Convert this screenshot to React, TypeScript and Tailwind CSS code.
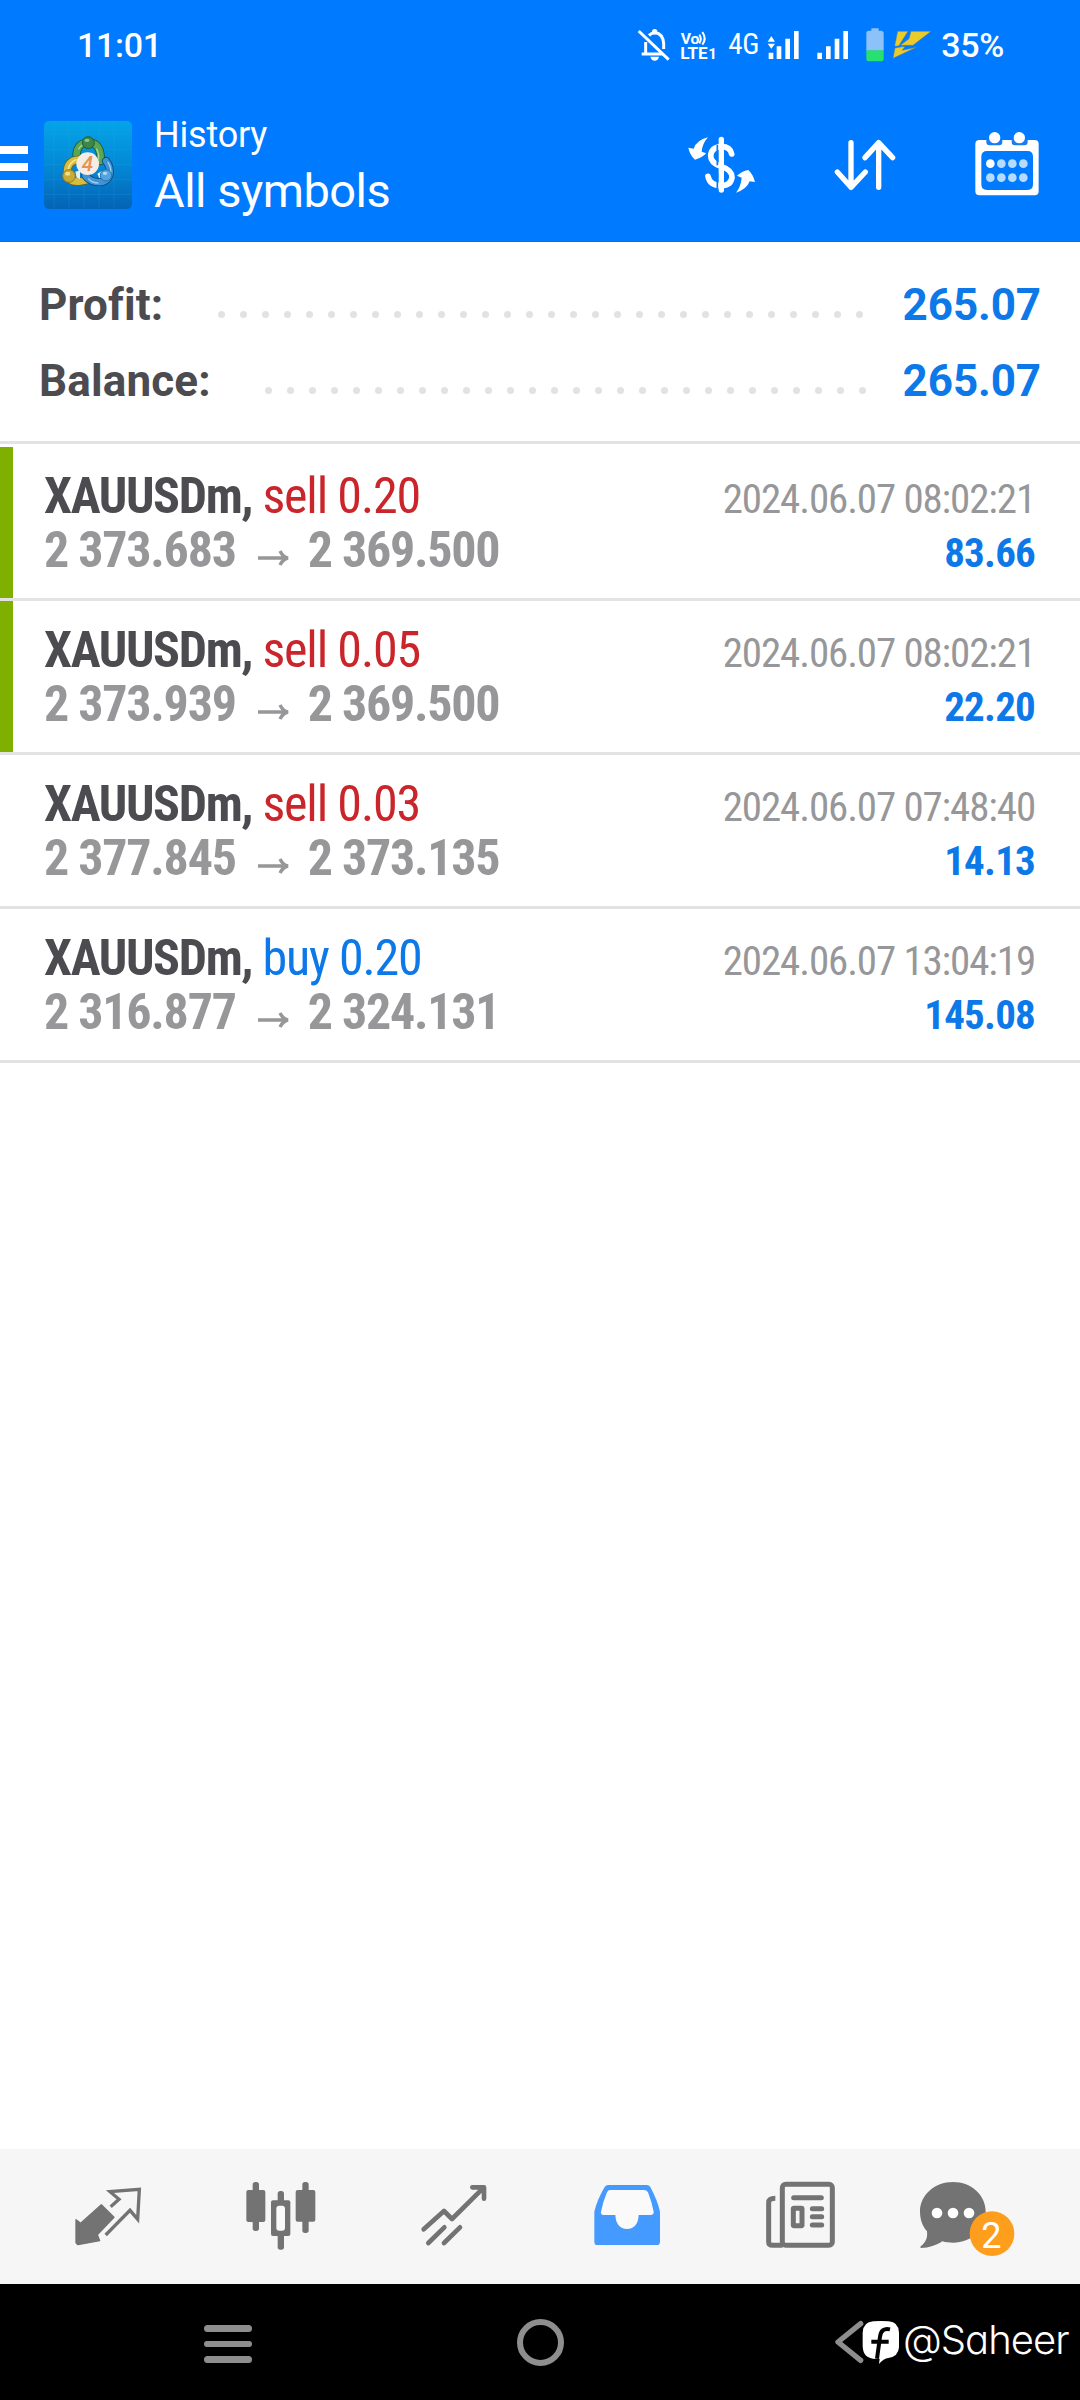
import React from 'react'

type Deal = {
    side: 'sell' | 'buy'
    volume: string
    open: string
    close: string
    time: string
    profit: string
    marked?: boolean
}

const deals: Deal[] = [
    { side: 'sell', volume: '0.20', open: '2 373.683', close: '2 369.500', time: '2024.06.07 08:02:21', profit: '83.66', marked: true },
    { side: 'sell', volume: '0.05', open: '2 373.939', close: '2 369.500', time: '2024.06.07 08:02:21', profit: '22.20', marked: true },
    { side: 'sell', volume: '0.03', open: '2 377.845', close: '2 373.135', time: '2024.06.07 07:48:40', profit: '14.13' },
    { side: 'buy', volume: '0.20', open: '2 316.877', close: '2 324.131', time: '2024.06.07 13:04:19', profit: '145.08' },
]

const StatusBar = () => (
    <div className="flex h-[91px] items-center pb-[2px] pl-[77px] pr-[76px] text-[34px] font-medium leading-none tracking-[-0.3px]">
        <span>11:01</span>
        <div className="ml-auto flex items-center">
            <svg className="h-[34px] w-[34px]" viewBox="52 50 102 102" fill="none" stroke="currentColor" strokeWidth="9">
                <path d="M78 128V92M88 72q8-8 18-8 24 2 26 33v16M66 128h64" />
                <path d="M57 59l90 86" />
                <circle cx="105" cy="61" r="8" fill="currentColor" stroke="none" />
                <path d="M92 136h26q-3 12-13 12t-13-12z" fill="currentColor" stroke="none" />
            </svg>
            <svg className="ml-[9px] h-[34px] w-[38px]" viewBox="183 50 114 102" fill="currentColor">
                <text x="185" y="97" fontSize="43" fontWeight="700" textLength="56" lengthAdjust="spacingAndGlyphs">Vo</text>
                <path d="M241 70q9 13 0 26M250 62q14 20 0 38" fill="none" stroke="currentColor" strokeWidth="6" />
                <text x="184" y="142" fontSize="49" fontWeight="700" textLength="82" lengthAdjust="spacingAndGlyphs">LTE</text>
                <text x="268" y="142" fontSize="45" fontWeight="700">1</text>
            </svg>
            <span className="ml-[10px] text-[29px] font-normal [font-stretch:75%]">4G</span>
            <svg className="ml-[8px] h-[34px] w-[34px]" viewBox="441 50 102 102" fill="currentColor">
                <path d="M454 74l11 17h-22zM454 112l-11-15h22zM446 124h14v19h-14zM470 105h14v38h-14zM496 82h14v61h-14zM522 59h14v84h-14z" />
            </svg>
            <svg className="ml-[15px] h-[34px] w-[34px]" viewBox="588 50 102 102" fill="currentColor">
                <path d="M592 124h14v19h-14zM618 105h14v38h-14zM644 82h14v61h-14zM670 59h14v84h-14z" />
            </svg>
            <svg className="ml-[15px] h-[34px] w-[20px]" viewBox="733 50 60 102">
                <path d="M752 51h22v7h7q8 0 8 8v52h-52V66q0-8 8-8h7z" fill="#8cc2f8" />
                <path d="M737 117h52v25q0 8-8 8h-36q-8 0-8-8z" fill="#27e070" />
            </svg>
            <svg className="ml-[6px] h-[34px] w-[42px]" viewBox="810 50 126 102" fill="#e9cb2c" stroke="#5b7f8a" strokeWidth="1.5">
                <path d="M830 60h31l-28 44h-12z" />
                <path d="M870 60h60l-54 42h-38l26-20z" />
                <path d="M822 110l30-5-8 12 42-9-70 33z" />
            </svg>
            <span className="ml-[8px]">35%</span>
        </div>
    </div>
)

const Logo = () => (
    <svg className="h-[88px] w-[88px]" viewBox="0 0 264 264">
        <defs>
            <linearGradient id="tile" x1="0" y1="0" x2="0" y2="1">
                <stop offset="0" stopColor="#04a4e8" />
                <stop offset="0.5" stopColor="#0389d6" />
                <stop offset="1" stopColor="#0463b4" />
            </linearGradient>
        </defs>
        <rect width="264" height="264" rx="15" fill="url(#tile)" />
        <path d="M30 0v264M75 0v264M120 0v264M165 0v264M210 0v264M0 40h264M0 85h264M0 130h264M0 175h264M0 220h264" stroke="#2ba8ea" strokeOpacity="0.3" strokeWidth="2" />
        <g fill="none" strokeLinecap="round">
            <path d="M98 112q-4-46 36-48 38 2 36 56" stroke="#1c5630" strokeWidth="25" />
            <path d="M98 112q-4-46 36-48 38 2 36 56" stroke="#5aa652" strokeWidth="20" />
            <path d="M104 84q8-14 22-17M158 84q8 16 6 30" stroke="#a8d79b" strokeWidth="4" />
            <path d="M104 116q-34 2-35 38 2 30 36 28l22-4" stroke="#6a6425" strokeWidth="25" />
            <path d="M104 116q-34 2-35 38 2 30 36 28l22-4" stroke="#d6bd3d" strokeWidth="20" />
            <path d="M95 116q-18 8-22 28" stroke="#f4e58f" strokeWidth="5" />
            <path d="M186 120q16 20 10 44-12 26-44 18-18-4-28-18" stroke="#0b477c" strokeWidth="24" />
            <path d="M186 120q16 20 10 44-12 26-44 18-18-4-28-18" stroke="#3f93d6" strokeWidth="19" />
            <path d="M192 124q10 16 8 30M134 174q12 12 28 12" stroke="#9dd0f4" strokeWidth="4" />
        </g>
        <path d="M94 152l14-4v26l-10-4zM160 158l14-8 2 16-10 6z" fill="#e4f1ee" />
        <circle cx="133" cy="65" r="18" fill="#3b8747" stroke="#205e35" strokeWidth="3" />
        <ellipse cx="129" cy="58" rx="8" ry="5" fill="#8cc58a" />
        <circle cx="75" cy="165" r="19" fill="#c9aa35" stroke="#8a7c2b" strokeWidth="3" />
        <ellipse cx="71" cy="158" rx="8" ry="6" fill="#f0df86" />
        <circle cx="186" cy="163" r="17" fill="#4ea5e2" stroke="#2973ae" strokeWidth="3" />
        <ellipse cx="183" cy="157" rx="7" ry="5" fill="#abd9f6" />
        <circle cx="131" cy="128" r="34" fill="#f6ece6" />
        <text x="130" y="151" textAnchor="middle" fontSize="62" fontStyle="italic" fontWeight="500" fill="#e59353">4</text>
    </svg>
)

const AppBar = () => (
    <div className="flex h-[151px] border-b border-[#0b6fd8]">
        <div className="mt-[55px] flex w-[28px] flex-col gap-[9px]">
            <div className="h-[8px] bg-white" />
            <div className="h-[8px] bg-white" />
            <div className="h-[8px] bg-white" />
        </div>
        <div className="ml-[16px] mt-[30px]">
            <Logo />
        </div>
        <div className="ml-[22px] mt-[20px]">
            <div className="text-[36px] leading-[48px] tracking-[-0.2px]">History</div>
            <div className="text-[47px] leading-[64px] tracking-[-0.5px]">All symbols</div>
        </div>
        <div className="ml-auto mr-[38px] mt-[39px] flex">
            <svg className="h-[70px] w-[80px]" viewBox="70 60 240 210" fill="none" stroke="currentColor">
                <path d="M185 88v152" strokeWidth="16" strokeLinecap="round" />
                <path d="M216 132q-4-22-31-22-30 2-32 27 0 22 33 33 31 10 31 32-3 24-32 25-35 0-40-28" strokeWidth="17" strokeLinecap="round" />
                <path d="M173 104v62M173 190v44" stroke="#007aff" strokeWidth="5" />
                <path d="M145 82q-34 8-43 34l-16-3q4 22 20 36 20-5 34-19l-14-5q2-24 19-43z" fill="currentColor" stroke="none" />
                <path d="M229 248q32-10 41-34l16 2q-5-22-20-36-20 4-34 17l14 6q-2 26-17 45z" fill="currentColor" stroke="none" />
            </svg>
            <svg className="ml-[69px] h-[70px] w-[66px]" viewBox="516 60 198 210" fill="none" stroke="currentColor" strokeWidth="16" strokeLinecap="round" strokeLinejoin="round">
                <path d="M573 98v134M532 186l41 46 43-46M656 232V98M615 143l41-45 42 45" />
            </svg>
            <svg className="ml-[74px] h-[70px] w-[70px]" viewBox="935 60 210 210" fill="currentColor">
                <path fillRule="evenodd" d="M957 90h166q12 0 12 12v142q0 12-12 12H957q-12 0-12-12V102q0-12 12-12zM980 123q-17 0-17 17v83q0 17 17 17h122q16 0 16-17v-83q0-17-16-17z" />
                <path d="M978 88h48v8q0 10-10 10h-28q-10 0-10-10zM1054 88h48v8q0 10-10 10h-28q-10 0-10-10z" fill="#1a7cf0" />
                <circle cx="1003" cy="83" r="17" />
                <circle cx="1077" cy="83" r="17" />
                <circle cx="990" cy="161" r="13" />
                <g fill="#b5dcff">
                    <circle cx="1023" cy="161" r="13" />
                    <circle cx="1056" cy="161" r="13" />
                    <circle cx="1089" cy="161" r="13" />
                    <circle cx="990" cy="203" r="13" />
                    <circle cx="1023" cy="203" r="13" />
                    <circle cx="1056" cy="203" r="13" />
                    <circle cx="1089" cy="203" r="13" />
                </g>
            </svg>
        </div>
    </div>
)

const SummaryRow = ({ label, value, dots, end }: { label: string; value: string; dots: number; end: string }) => (
    <div className="flex h-[76px] pl-[39px] pr-[39px] text-[44px] font-bold leading-[76px]">
        <span className="tracking-[0.15px] text-[#4b4b50]">{label}</span>
        <div className={`ml-auto mt-[44px] flex gap-[15px] ${end}`}>
            {Array.from({ length: dots }, (_, i) => (
                <div key={i} className="h-[7px] w-[7px] rounded-full bg-[#e2e2e2]" />
            ))}
        </div>
        <span className="tracking-[-0.1px] text-[#0d78e8]">{value}</span>
    </div>
)

const DealRow = ({ side, volume, open, close, time, profit, marked }: Deal) => (
    <div className="flex h-[154px] border-b-[3px] border-[#e3e3e3] [font-stretch:75%]">
        <div className={marked ? 'w-[13px] bg-[#7fb000]' : 'w-[13px]'} />
        <div className="flex flex-1 justify-between pl-[31px] pr-[45px]">
            <div className="pt-[22px] text-[50px] leading-[54px]">
                <div className="tracking-[-1.35px]">
                    <span className="font-bold text-[#4b4b50]">XAUUSDm, </span>
                    <span className={side === 'sell' ? 'tracking-[-1.15px] text-[#c9252b]' : 'tracking-[-1.15px] text-[#0d78e8]'}>
                        {side} {volume}
                    </span>
                </div>
                <div className="flex font-bold tracking-[-1.25px] text-[#97979a]">
                    <span>{open}</span>
                    <svg className="ml-[20px] mr-[16px] mt-[26px] h-[18px] w-[36px]" viewBox="0 0 36 18" fill="none" stroke="currentColor" strokeWidth="3.5">
                        <path d="M2 9h30M24 2q3 6 8 7-5 1-8 7" />
                    </svg>
                    <span>{close}</span>
                </div>
            </div>
            <div className="pt-[25px] text-right text-[41px] leading-[54px]">
                <div className="tracking-[-1.12px] text-[#97979a]">{time}</div>
                <div className="font-bold tracking-[-0.8px] text-[#0d78e8]">{profit}</div>
            </div>
        </div>
    </div>
)

const TabBar = () => (
    <div className="grid h-[135px] grid-cols-6 justify-items-center bg-[#f6f6f6] px-[21px] pt-[31px] text-[#737373]">
        <svg className="h-[72px] w-[120px]" viewBox="55 120 360 216" fill="none" stroke="currentColor">
            <path d="M139 239l14 11 62-56 38 38-50 52 7 18-65 12-6-6z" fill="currentColor" strokeWidth="4" strokeLinejoin="round" />
            <path d="M243 200l25-22-27-23 88-7-5 90-23-27-73 74" strokeWidth="10" />
        </svg>
        <svg className="h-[72px] w-[120px]" viewBox="574 120 360 216" fill="currentColor">
            <rect x="669" y="126" width="19" height="147" rx="8" />
            <rect x="650" y="150" width="57" height="96" rx="6" />
            <rect x="744" y="153" width="19" height="176" rx="8" />
            <rect x="724" y="181" width="58" height="107" rx="6" />
            <rect x="740" y="197" width="26" height="75" rx="9" fill="#fafafa" />
            <rect x="818" y="126" width="19" height="153" rx="8" />
            <rect x="798" y="150" width="59" height="95" rx="6" />
        </svg>
        <svg className="h-[72px] w-[120px]" viewBox="1093 120 360 216" fill="none" stroke="currentColor" strokeWidth="14" strokeLinecap="round" strokeLinejoin="round">
            <path d="M1182 268l61-55 24 24 95-94M1328 142h35v34M1196 309l48-47M1243 309l48-47" />
        </svg>
        <svg className="h-[72px] w-[120px]" viewBox="52 120 360 216">
            <path d="M175 135h117q6 0 10 6 23 44 29 74v90q0 10-10 10H143q-9 0-9-10v-90q8-35 31-74 4-6 10-6z" fill="#459aff" />
            <path d="M182 150h100q9 0 13 7 11 28 17 58 1 9-9 10h-36q-2 41-35 42-33-1-35-42h-35q-10-1-8-10 6-30 18-58 3-7 10-7z" fill="#fafafa" />
        </svg>
        <svg className="h-[72px] w-[120px]" viewBox="572 120 360 216" fill="none" stroke="currentColor" strokeWidth="15" strokeLinecap="round">
            <rect x="699" y="133" width="150" height="183" rx="10" />
            <path d="M678 175q-20 0-20 13v118q0 10 12 10h30" strokeLinecap="butt" />
            <rect x="732" y="205" width="26" height="52" rx="2" />
            <path d="M733 173h83M789 206h28M789 230h28M789 255h28" />
        </svg>
        <svg className="h-[72px] w-[120px] overflow-visible" viewBox="1089 120 360 216" fill="currentColor">
            <path d="M1209 126c56 0 98 40 98 88 0 54-42 94-98 94-12 0-22-1-32-4-18 12-40 20-64 20-3-2-2-4 0-6 16-12 20-26 18-44-14-16-21-36-21-60 0-48 43-88 99-88z" />
            <circle cx="1161" cy="219" r="16" fill="#fff" />
            <circle cx="1209" cy="219" r="16" fill="#fff" />
            <circle cx="1257" cy="219" r="16" fill="#fff" />
            <circle cx="1326" cy="281" r="67" fill="#ff9d1c" />
            <text x="1324" y="325" textAnchor="middle" fontSize="108" fill="#fff">2</text>
        </svg>
    </div>
)

const NavBar = () => (
    <div className="relative flex h-[116px] justify-center bg-black text-[#8e8e8e]">
        <div className="flex w-[312px] justify-center pt-[41px]">
            <div className="flex w-[48px] flex-col gap-[9px]">
                <div className="h-[6.5px] rounded-full bg-[#8e8e8e]" />
                <div className="h-[6.5px] rounded-full bg-[#8e8e8e]" />
                <div className="h-[6.5px] rounded-full bg-[#8e8e8e]" />
            </div>
        </div>
        <div className="flex w-[312px] justify-center pt-[35px]">
            <div className="h-[47px] w-[47px] rounded-full border-[6px] border-[#8e8e8e]" />
        </div>
        <div className="flex w-[312px] justify-center pr-[4px] pt-[34px]">
            <svg className="h-[48px] w-[36px]" viewBox="156 114 108 144" fill="none" stroke="currentColor" strokeWidth="16" strokeLinecap="round" strokeLinejoin="round">
                <path d="M242 131l-68 55 68 55" />
            </svg>
        </div>
        <div className="absolute left-[862px] top-[34px] flex text-white">
            <svg className="h-[46px] w-[38px]" viewBox="246 114 114 138">
                <path d="M280 124q24-2 46 0 30 2 31 34v44q-2 28-32 32-14 2-28 18l2-16q-50 6-51-38v-40q1-32 32-34z" fill="#fff" />
                <path d="M330 148q-26-6-30 22l-9 66M274 185h52" fill="none" stroke="#000" strokeWidth="12" />
            </svg>
            <span className="ml-[3px] mt-[-2px] font-['Inter','Roboto',sans-serif] text-[40px] font-light leading-[48px] tracking-[-1px] [font-feature-settings:'cv11']">@Saheer</span>
        </div>
    </div>
)

const App = () => (
    <div className="flex h-[2400px] w-[1080px] flex-col overflow-hidden bg-white font-['Roboto',sans-serif]">
        <header className="bg-[#007aff] text-white">
            <StatusBar />
            <AppBar />
        </header>
        <section className="h-[202px] border-b-[3px] border-[#e3e3e3] pt-[25px]">
            <SummaryRow label="Profit:" value="265.07" dots={30} end="mr-[40px]" />
            <SummaryRow label="Balance:" value="265.07" dots={28} end="mr-[37px]" />
        </section>
        <main className="flex-1 pt-[3px]">
            {deals.map((deal) => (
                <DealRow key={deal.open} {...deal} />
            ))}
        </main>
        <TabBar />
        <NavBar />
    </div>
)

export default App
